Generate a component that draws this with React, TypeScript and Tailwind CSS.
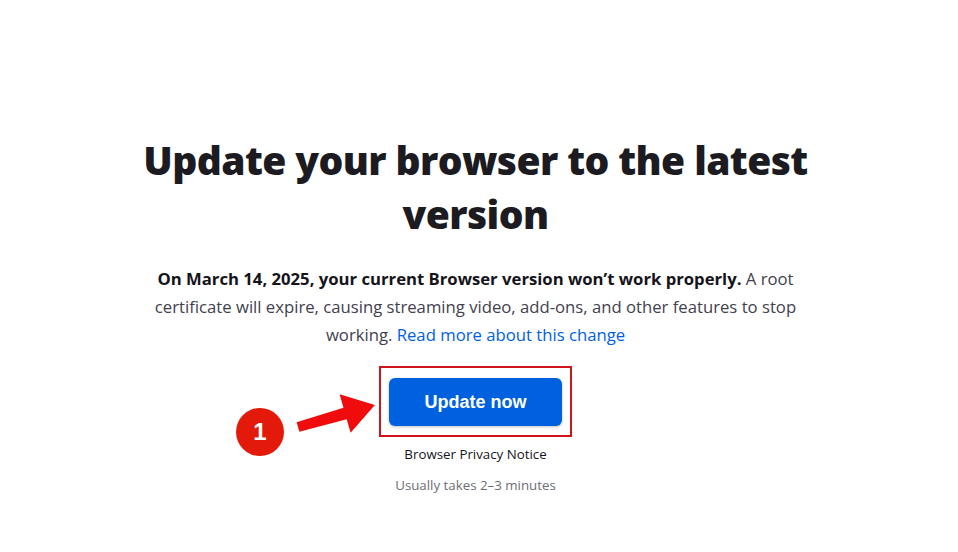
export default function App() {
  return (
    <div className="min-h-[552px] w-full bg-white flex flex-col items-center pt-[133px] pr-[7px]" style={{ fontFamily: "'Open Sans', sans-serif" }}>
      <h1 className="max-w-[700px] text-center text-[39px] leading-[54px] font-extrabold text-[#1c1b22] tracking-[-0.6px]">
        Update your browser to the latest version
      </h1>

      <p className="mt-[24px] max-w-[660px] text-center text-[16.7px] leading-[28px] text-[#42414d]">
        <strong className="font-bold text-[#15141a]">On March 14, 2025, your current Browser version won’t work properly.</strong>{' '}
        A root certificate will expire, causing streaming video, add-ons, and other features to stop working.{' '}
        <a href="#" className="text-[#0061e0]">Read more about this change</a>
      </p>

      <div className="relative mt-[29px]">
        <div className="absolute -left-[10px] -top-[12px] -right-[10px] -bottom-[11px] border-2 border-[#d0141a]" />
        <button
          className="relative w-[173px] h-[48px] rounded-[6px] bg-[#0061e0] text-white text-[18px] font-bold shadow-[0_1px_3px_rgba(0,0,0,0.25)]"
          style={{ fontFamily: "'Liberation Sans', Arial, sans-serif" }}
        >
          Update now
        </button>

        <svg className="absolute left-[-99px] top-[7px]" width="90" height="55" viewBox="290 385 90 55">
          <polygon
            points="296.6,422.2 343.5,407.7 339.6,394.3 374.9,405 350.6,432.7 346.7,419.3 299.4,431.8"
            fill="#f00c0c"
          />
        </svg>

        <div
          className="absolute left-[-153px] top-[30px] w-[48px] h-[48px] rounded-full bg-[#e31a0b] flex items-center justify-center text-white text-[24px] font-bold"
          style={{ fontFamily: "'Liberation Sans', Arial, sans-serif" }}
        >
          1
        </div>
      </div>

      <a href="#" className="mt-[19px] text-[13.3px] leading-[18px] text-[#15141a]">Browser Privacy Notice</a>
      <p className="mt-[13px] text-[13.3px] leading-[18px] text-[#6e6d75]">Usually takes 2–3 minutes</p>
    </div>
  );
}
